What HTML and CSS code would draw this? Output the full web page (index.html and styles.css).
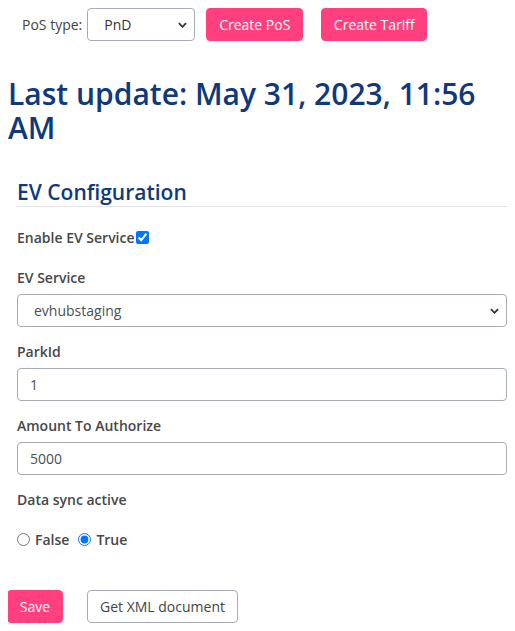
FILE: index.html
```html
<!DOCTYPE html>
<html lang="en">
<head>
<meta charset="utf-8">
<title>EV Configuration</title>
<link rel="stylesheet" href="styles.css">
</head>
<body>
<div class="toolbar">
  <label class="pos-label" for="posType">PoS type:</label>
  <select id="posType" class="pos-select">
    <option>PnD</option>
  </select>
  <button class="btn btn-pink btn-pos">Create PoS</button>
  <button class="btn btn-pink btn-tariff">Create Tariff</button>
</div>

<h1 class="title">Last update: May 31, 2023, 11:56 AM</h1>

<form class="config">
  <h2 class="section-title">EV Configuration</h2>

  <div class="check-row">
    <label class="field-label inline" for="enableEv">Enable EV Service</label><input id="enableEv" type="checkbox" class="checkbox" checked>
  </div>

  <div class="group first">
    <label class="field-label" for="evService">EV Service</label>
    <select id="evService" class="control select">
      <option>evhubstaging</option>
    </select>
  </div>

  <div class="group">
    <label class="field-label" for="parkId">ParkId</label>
    <input id="parkId" class="control" type="text" value="1">
  </div>

  <div class="group">
    <label class="field-label" for="amount">Amount To Authorize</label>
    <input id="amount" class="control" type="text" value="5000">
  </div>

  <div class="group">
    <span class="field-label">Data sync active</span>
    <div class="radios">
      <label class="radio-label"><input type="radio" name="sync" class="radio"> False</label>
      <label class="radio-label"><input type="radio" name="sync" class="radio" checked> True</label>
    </div>
  </div>
</form>

<div class="actions">
  <button class="btn btn-pink btn-save">Save</button>
  <button class="btn btn-outline">Get XML document</button>
</div>
</body>
</html>
```

FILE: styles.css
```css
html, body {
  margin: 0;
  padding: 0;
  background: #ffffff;
}

body {
  margin: 8px;
  font-family: "Open Sans", "Liberation Sans", sans-serif;
  font-size: 14px;
  color: #444444;
}

.toolbar {
  display: flex;
  align-items: center;
  height: 33px;
}

.pos-label {
  margin-left: 14px;
  margin-right: 5px;
  font-size: 14px;
  color: #444444;
}

.pos-select {
  width: 108px;
  height: 33px;
  box-sizing: border-box;
  padding: 0 8px 0 16px;
  font-family: "Open Sans", sans-serif;
  font-size: 14px;
  color: #333333;
  background-color: #fff;
  border: 1px solid #a7acb4;
  border-radius: 4px;
  appearance: none;
  -webkit-appearance: none;
  background-image: url("data:image/svg+xml,%3Csvg xmlns='http://www.w3.org/2000/svg' width='10' height='6' viewBox='0 0 10 6'%3E%3Cpath d='M1 1l4 4 4-4' fill='none' stroke='%23333' stroke-width='2'/%3E%3C/svg%3E");
  background-repeat: no-repeat;
  background-position: right 7px center;
  background-size: 9px 6px;
}

.btn {
  height: 33px;
  box-sizing: border-box;
  font-family: "Open Sans", sans-serif;
  font-size: 14px;
  border-radius: 4px;
  cursor: pointer;
  padding: 0;
  white-space: nowrap;
}

.btn-pink {
  background: #ff3f7e;
  border: 1px solid #ff3f7e;
  color: #ffffff;
}

.btn-pos {
  margin-left: 11px;
  width: 97px;
}

.btn-tariff {
  margin-left: 18px;
  width: 106px;
}

.title {
  margin: 36px 0 0 0;
  font-size: 30px;
  line-height: 34px;
  font-weight: 600;
  color: #10397c;
}

.config {
  margin: 33px 0 0 9px;
}

.section-title {
  margin: 0;
  font-size: 21px;
  line-height: 28px;
  font-weight: 600;
  color: #10397c;
  border-bottom: 1px solid #e3e5e8;
  padding-bottom: 0;
}

.field-label {
  display: block;
  margin-bottom: 6px;
  font-size: 14px;
  line-height: 21px;
  font-weight: 600;
  color: #474747;
}

.field-label.inline {
  display: inline;
  margin: 0;
}

.check-row {
  margin-top: 20px;
  height: 21px;
  display: flex;
  align-items: center;
}

.checkbox {
  margin: 0 0 0 1px;
  width: 13px;
  height: 13px;
}

.group {
  margin-top: 14px;
}

.group.first {
  margin-top: 19px;
}

.control {
  display: block;
  width: 100%;
  height: 33px;
  box-sizing: border-box;
  padding: 0 12px;
  font-family: "Open Sans", sans-serif;
  font-size: 14px;
  color: #495057;
  background: #fff;
  border: 1px solid #a7acb4;
  border-radius: 4px;
}

.select {
  padding-left: 16px;
  appearance: none;
  -webkit-appearance: none;
  background-image: url("data:image/svg+xml,%3Csvg xmlns='http://www.w3.org/2000/svg' width='10' height='6' viewBox='0 0 10 6'%3E%3Cpath d='M1 1l4 4 4-4' fill='none' stroke='%23333' stroke-width='2'/%3E%3C/svg%3E");
  background-repeat: no-repeat;
  background-position: right 7px center;
  background-size: 9px 6px;
}

.radios {
  display: flex;
  align-items: center;
  gap: 9px;
  margin-top: 19px;
  height: 21px;
}

.radio-label {
  display: flex;
  align-items: center;
  gap: 5px;
  font-size: 14px;
  font-weight: 600;
  color: #474747;
}

.radio {
  margin: 0;
  width: 13px;
  height: 13px;
}

.actions {
  display: flex;
  gap: 24px;
  margin-top: 40px;
  margin-left: -1px;
}

.btn-save {
  width: 56px;
}

.btn-outline {
  background: #ffffff;
  border: 1px solid #a7acb4;
  color: #444444;
  width: 151px;
}
```
